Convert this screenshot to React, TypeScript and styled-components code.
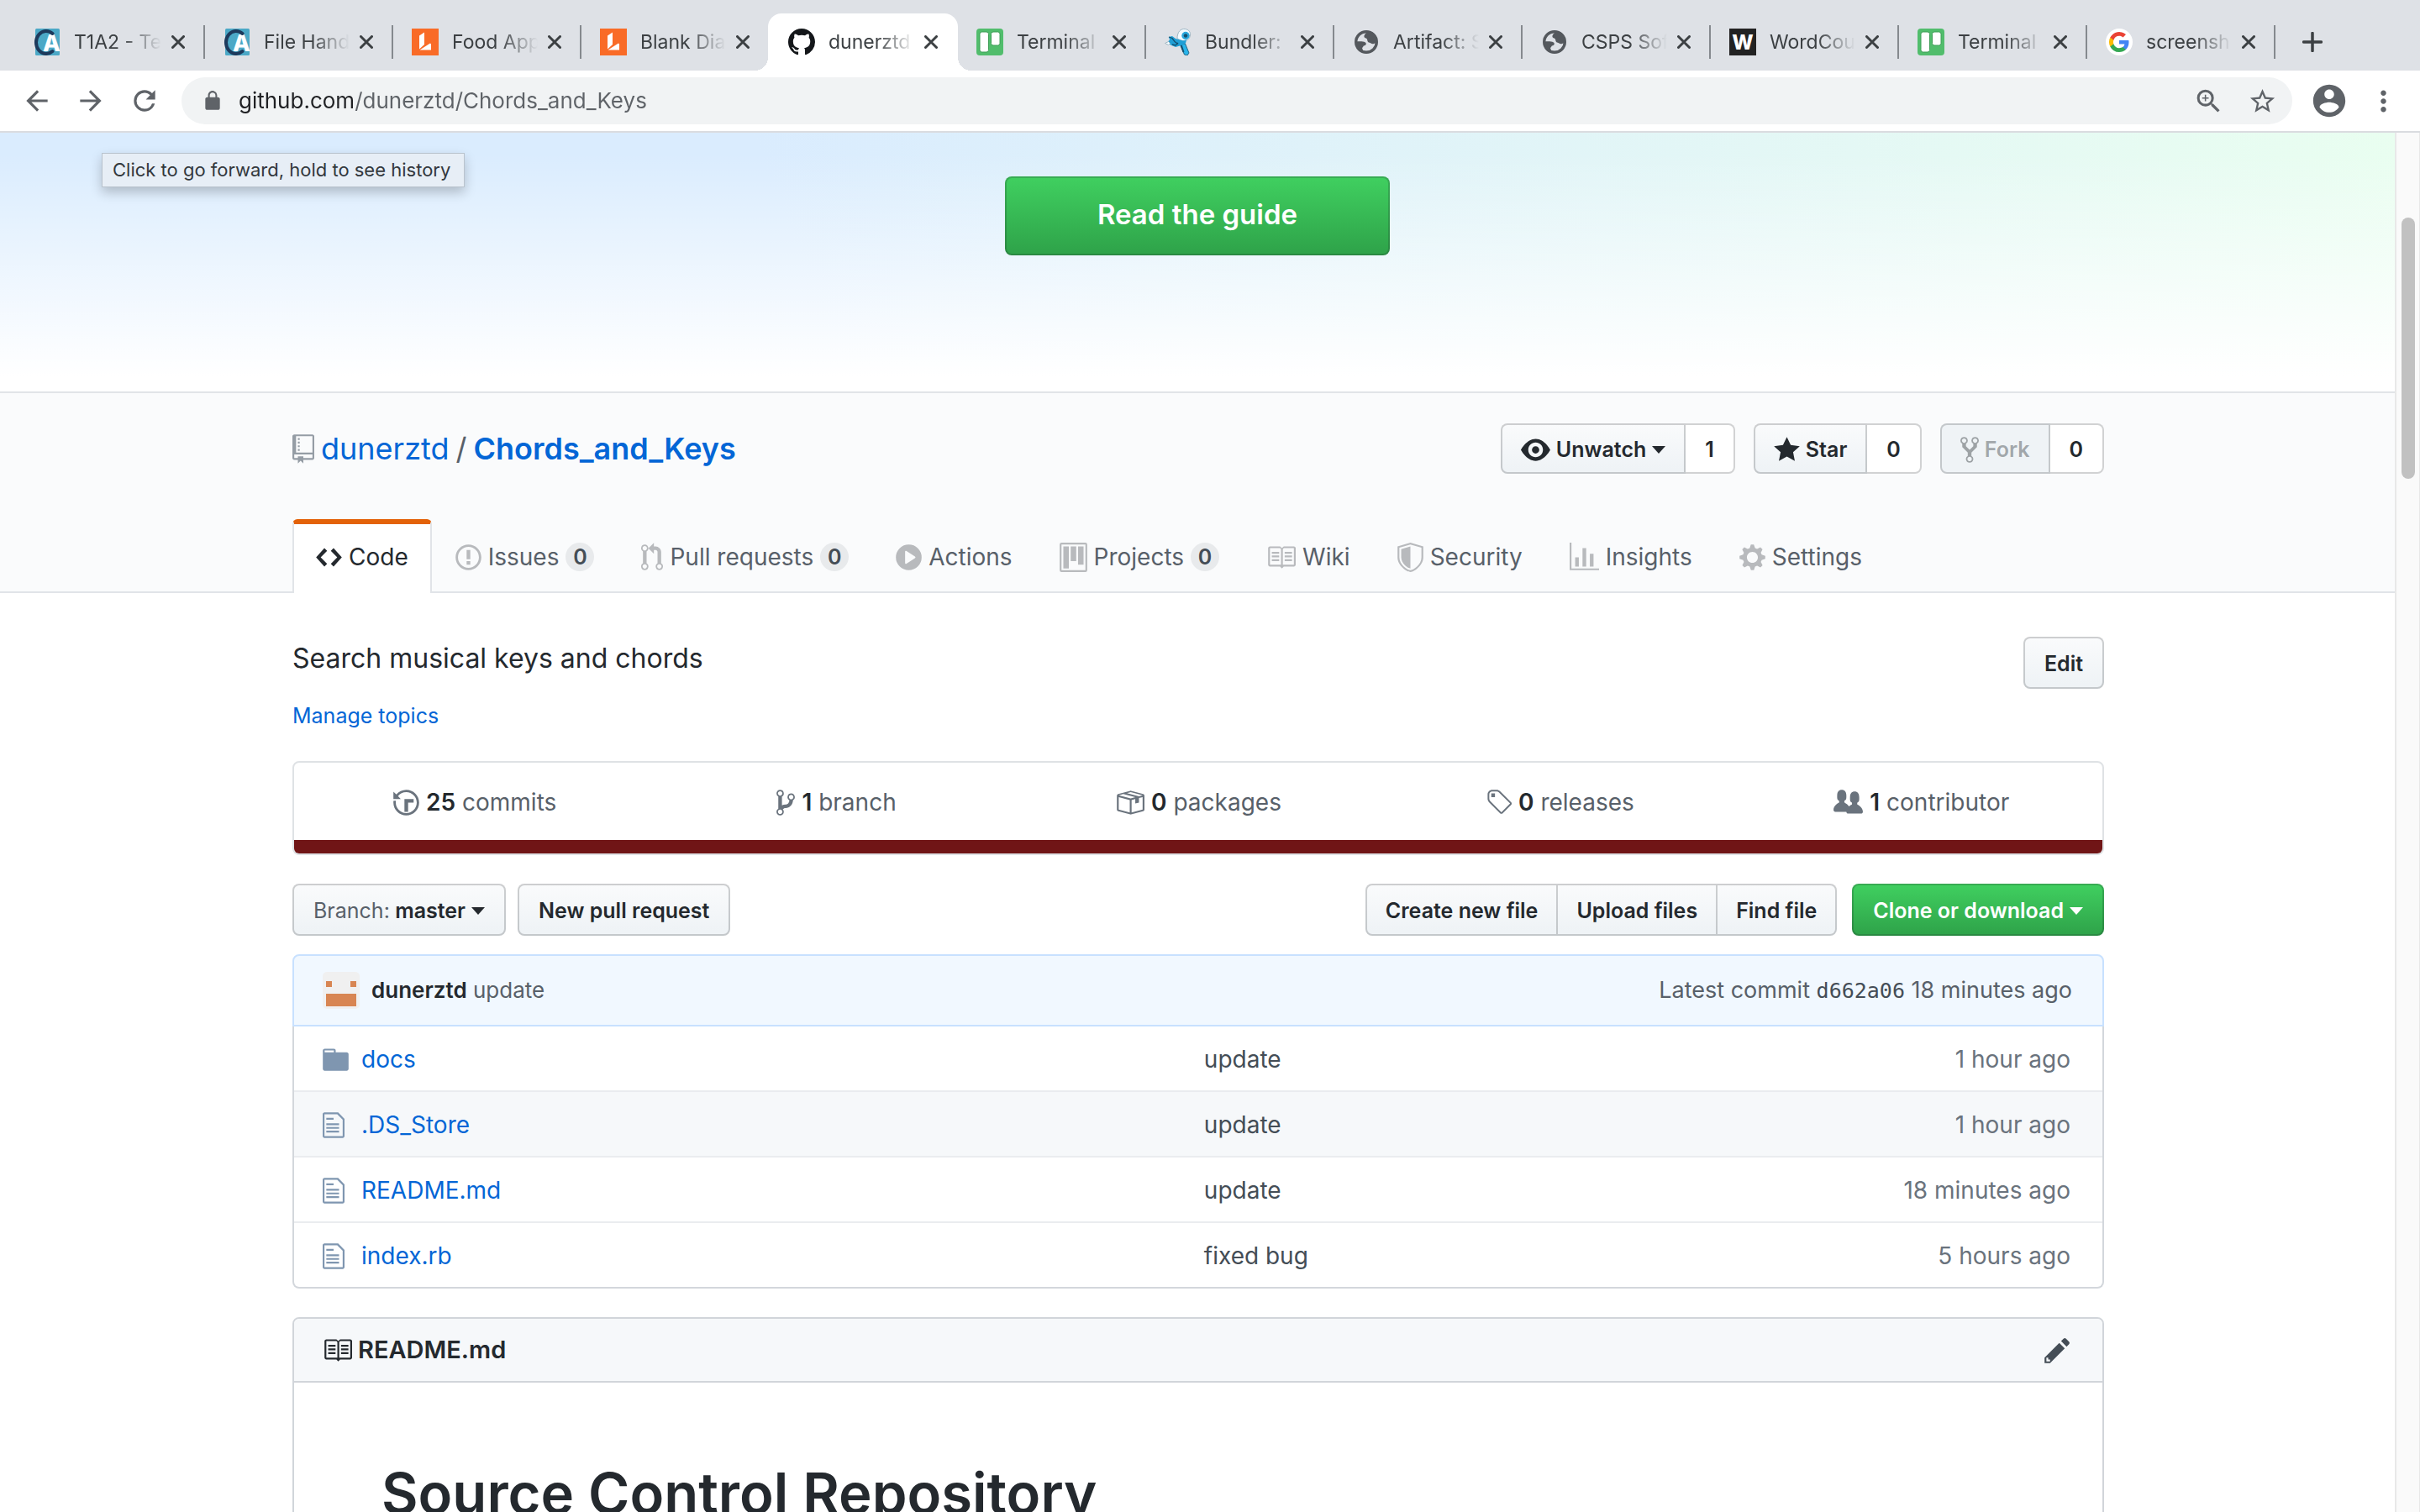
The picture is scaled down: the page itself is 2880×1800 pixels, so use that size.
import React from "react";
import styled, { createGlobalStyle, css } from "styled-components";

const sans = `Inter, "Liberation Sans", Arial, sans-serif`;
const mono = `"DejaVu Sans Mono", "Liberation Mono", monospace`;

const Global = createGlobalStyle`
  * { box-sizing: border-box; }
  body { margin: 0; background: #fff; color: #24292e; font-family: ${sans}; overflow: hidden; }
  button, input { font-family: inherit; }
  a { color: inherit; text-decoration: none; }
  svg { display: block; flex: none; }
`;

/* ---------- icons ---------- */

const OCTICONS = {
  repo: [12, "M4 9H3V8h1v1zm0-3H3v1h1V6zm0-2H3v1h1V4zm0-2H3v1h1V2zm8-1v12c0 .55-.45 1-1 1H6v2l-1.5-1.5L3 16v-2H1c-.55 0-1-.45-1-1V1c0-.55.45-1 1-1h10c.55 0 1 .45 1 1zm-1 10H1v2h2v-1h3v1h5v-2zm0-10H2v9h9V1z"],
  eye: [16, "M8.06 2C3 2 0 8 0 8s3 6 8.06 6C13 14 16 8 16 8s-3-6-7.94-6zM8 12c-2.2 0-4-1.78-4-4 0-2.2 1.8-4 4-4 2.22 0 4 1.8 4 4 0 2.22-1.78 4-4 4zm2-4c0 1.11-.89 2-2 2-1.11 0-2-.89-2-2 0-1.11.89-2 2-2 1.11 0 2 .89 2 2z"],
  star: [14, "M14 6l-4.9-.64L7 1 4.9 5.36 0 6l3.6 3.26L2.67 14 7 11.67 11.33 14l-.93-4.74L14 6z"],
  fork: [10, "M8 1a1.993 1.993 0 00-1 3.72V6L5 8 3 6V4.72A1.993 1.993 0 002 1a1.993 1.993 0 00-1 3.72V6.5l3 3v1.78A1.993 1.993 0 005 15a1.993 1.993 0 001-3.72V9.5l3-3V4.72A1.993 1.993 0 008 1zM2 4.2C1.34 4.2.8 3.65.8 3c0-.65.55-1.2 1.2-1.2.65 0 1.2.55 1.2 1.2 0 .65-.55 1.2-1.2 1.2zm3 10c-.66 0-1.2-.55-1.2-1.2 0-.65.55-1.2 1.2-1.2.65 0 1.2.55 1.2 1.2 0 .65-.55 1.2-1.2 1.2zm3-10c-.66 0-1.2-.55-1.2-1.2 0-.65.55-1.2 1.2-1.2.65 0 1.2.55 1.2 1.2 0 .65-.55 1.2-1.2 1.2z"],
  code: [14, "M9.5 3L8 4.5 11.5 8 8 11.5 9.5 13 14 8 9.5 3zm-5 0L0 8l4.5 5L6 11.5 2.5 8 6 4.5 4.5 3z"],
  issue: [14, "M7 2.3c3.14 0 5.7 2.56 5.7 5.7s-2.56 5.7-5.7 5.7A5.71 5.71 0 011.3 8c0-3.14 2.56-5.7 5.7-5.7zM7 1C3.14 1 0 4.14 0 8s3.14 7 7 7 7-3.14 7-7-3.14-7-7-7zm1 3H6v5h2V4zm0 6H6v2h2v-2z"],
  pull: [12, "M11 11.28V5c-.03-.78-.34-1.47-.94-2.06C9.46 2.35 8.78 2.03 8 2H7V0L4 3l3 3V4h1c.27.02.48.11.69.31.21.2.3.42.31.69v6.28A1.993 1.993 0 0010 15a1.993 1.993 0 001-3.72zm-1 2.92c-.66 0-1.2-.55-1.2-1.2 0-.65.55-1.2 1.2-1.2.65 0 1.2.55 1.2 1.2 0 .65-.55 1.2-1.2 1.2zM4 3c0-1.11-.89-2-2-2a1.993 1.993 0 00-1 3.72v6.56A1.993 1.993 0 002 15a1.993 1.993 0 001-3.72V4.72c.59-.34 1-.98 1-1.72zm-.8 10c0 .66-.55 1.2-1.2 1.2-.65 0-1.2-.55-1.2-1.2 0-.65.55-1.2 1.2-1.2.65 0 1.2.55 1.2 1.2zM2 4.2C1.34 4.2.8 3.65.8 3c0-.65.55-1.2 1.2-1.2.65 0 1.2.55 1.2 1.2 0 .65-.55 1.2-1.2 1.2z"],
  play: [14, "M14 8A7 7 0 110 8a7 7 0 0114 0zm-8.223 3.482l4.599-3.066a.5.5 0 000-.832L5.777 4.518A.5.5 0 005 4.934v6.132a.5.5 0 00.777.416z"],
  project: [15, "M10 12h3V2h-3v10zm-4-2h3V2H6v8zm-4 4h3V2H2v12zm-1 1h13V1H1v14zM14 0H1a1 1 0 00-1 1v14a1 1 0 001 1h13a1 1 0 001-1V1a1 1 0 00-1-1z"],
  book: [16, "M3 5h4v1H3V5zm0 3h4V7H3v1zm0 2h4V9H3v1zm11-5h-4v1h4V5zm0 2h-4v1h4V7zm0 2h-4v1h4V9zm2-6v9c0 .55-.45 1-1 1H9.5l-1 1-1-1H2c-.55 0-1-.45-1-1V3c0-.55.45-1 1-1h5.5l1 1 1-1H15c.55 0 1 .45 1 1zm-8 .5L7.5 3H2v9h6V3.5zm7-.5H9.5l-.5.5V12h6V3z"],
  shield: [14, "M0 2l7-2 7 2v6.02C14 12.69 8.69 16 7 16c-1.69 0-7-3.31-7-7.98V2zm1 .75L7 1l6 1.75v5.268C13 12.104 8.449 15 7 15c-1.449 0-6-2.896-6-6.982V2.75zm1 .75L7 2v12c-1.207 0-5-2.482-5-5.985V3.5z"],
  graph: [16, "M16 14v1H0V0h1v14h15zM5 13H3V8h2v5zm4 0H7V3h2v10zm4 0h-2V6h2v7z"],
  gear: [14, "M14 8.77v-1.6l-1.94-.64-.45-1.09.88-1.84-1.13-1.13-1.81.91-1.09-.45-.69-1.92h-1.6l-.63 1.94-1.11.45-1.84-.88-1.13 1.13.91 1.81-.45 1.09L0 7.23v1.59l1.94.64.45 1.09-.88 1.84 1.13 1.13 1.81-.91 1.09.45.69 1.92h1.59l.63-1.94 1.11-.45 1.84.88 1.13-1.13-.92-1.81.47-1.09L14 8.75v.02zM7 11c-1.66 0-3-1.34-3-3s1.34-3 3-3 3 1.34 3 3-1.34 3-3 3z"],
  history: [14, "M8 13H6V6h5v2H8v5zM7 1C4.81 1 2.87 2.02 1.59 3.59L0 2v4h4L2.5 4.5C3.55 3.17 5.17 2.3 7 2.3c3.14 0 5.7 2.56 5.7 5.7s-2.56 5.7-5.7 5.7A5.71 5.71 0 011.3 8c0-.34.03-.67.09-1H.08C.03 7.33 0 7.66 0 8c0 3.86 3.14 7 7 7s7-3.14 7-7-3.14-7-7-7z"],
  branch: [10, "M10 5c0-1.11-.89-2-2-2a1.993 1.993 0 00-1 3.72v.3c-.02.52-.23.98-.63 1.38-.4.4-.86.61-1.38.63-.83.02-1.48.16-2 .45V4.72a1.993 1.993 0 00-1-3.72C.88 1 0 1.89 0 3a2 2 0 001 1.72v6.56c-.59.35-1 .99-1 1.72 0 1.11.89 2 2 2 1.11 0 2-.89 2-2 0-.53-.2-1-.53-1.36.09-.06.48-.41.59-.47.25-.11.56-.17.94-.17 1.05-.05 1.95-.45 2.75-1.25S8.95 7.77 9 6.73h-.02C9.59 6.37 10 5.73 10 5zM2 1.8c.66 0 1.2.55 1.2 1.2 0 .65-.55 1.2-1.2 1.2C1.35 4.2.8 3.65.8 3c0-.65.55-1.2 1.2-1.2zm0 12.41c-.66 0-1.2-.55-1.2-1.2 0-.65.55-1.2 1.2-1.2.65 0 1.2.55 1.2 1.2 0 .65-.55 1.2-1.2 1.2zm6-8c-.66 0-1.2-.55-1.2-1.2 0-.65.55-1.2 1.2-1.2.65 0 1.2.55 1.2 1.2 0 .65-.55 1.2-1.2 1.2z"],
  pkg: [16, "M1 4.27v7.47c0 .45.3.84.75.97l6.5 1.73c.16.05.34.05.5 0l6.5-1.73c.45-.13.75-.52.75-.97V4.27c0-.45-.3-.84-.75-.97l-6.5-1.74a1.4 1.4 0 00-.5 0L1.75 3.3c-.45.13-.75.52-.75.97zm7 9.09l-6-1.59V5l6 1.61v6.75zM2 4l2.5-.67L11 5.06l-2.5.67L2 4zm13 7.77l-6 1.59V6.61l2-.55V8.5l2-.53V5.53L15 5v6.77zm-2-7.24L6.5 2.8l2-.53L15 4l-2 .53z"],
  tag: [14, "M7.73 1.73C7.26 1.26 6.62 1 5.96 1H3.5C2.13 1 1 2.13 1 3.5v2.47c0 .66.27 1.3.73 1.77l6.06 6.06c.39.39 1.02.39 1.41 0l4.59-4.59a.996.996 0 000-1.41L7.73 1.73zM2.38 7.09c-.31-.3-.47-.7-.47-1.13V3.5c0-.88.72-1.59 1.59-1.59h2.47c.42 0 .83.16 1.13.47l6.14 6.13-4.73 4.73-6.13-6.15zM3.01 3h2v2H3V3h.01z"],
  people: [16, "M16 12.999c0 .439-.45 1-1 1H7.995c-.539 0-.994-.447-.995-.999H1c-.54 0-1-.561-1-1 0-2.634 3-4 3-4s.229-.409 0-1c-.841-.621-1.058-.59-1-3 .058-2.419 1.367-3 2.5-3s2.442.58 2.5 3c.058 2.41-.159 2.379-1 3-.229.59 0 1 0 1s1.549.711 2.42 2.088C9.196 9.369 10 8.999 10 8.999s.229-.409 0-1c-.841-.62-1.058-.59-1-3 .058-2.419 1.367-3 2.5-3s2.437.581 2.495 3c.059 2.41-.158 2.38-1 3-.229.59 0 1 0 1s3.005 1.366 3.005 4z"],
  file: [12, "M6 5H2V4h4v1zM2 8h7V7H2v1zm0 2h7V9H2v1zm0 2h7v-1H2v1zm10-7.5V14c0 .55-.45 1-1 1H1c-.55 0-1-.45-1-1V2c0-.55.45-1 1-1h7.5L12 4.5zM11 5L8 2H1v12h10V5z"],
  folder: [14, "M13 4H7V3c0-.66-.31-1-1-1H1c-.55 0-1 .45-1 1v10c0 .55.45 1 1 1h12c.55 0 1-.45 1-1V5c0-.55-.45-1-1-1zM6 4H1V3h5v1z"],
  pencil: [14, "M0 12v3h3l8-8-3-3-8 8zm3 2H1v-2h1v1h1v1zm10.3-9.3L12 6 9 3l1.3-1.3a.996.996 0 011.41 0l1.59 1.59c.39.39.39 1.02 0 1.41z"],
} as const;

type OctName = keyof typeof OCTICONS;

const Oct = ({ name }: { name: OctName }) => {
  const [w, d] = OCTICONS[name];
  return (
    <svg width={Math.round(w * 2.2)} height={35} viewBox={`0 0 ${w} 16`} fill="currentColor" aria-hidden="true">
      <path fillRule="evenodd" d={d} />
    </svg>
  );
};

const GLYPHS = {
  back: "M20 11H7.83l5.59-5.59L12 4l-8 8 8 8 1.41-1.41L7.83 13H20v-2z",
  forward: "M12 4l-1.41 1.41L16.17 11H4v2h12.17l-5.58 5.59L12 20l8-8z",
  reload: "M17.65 6.35A7.958 7.958 0 0012 4a8 8 0 100 16c3.73 0 6.84-2.55 7.73-6h-2.08A5.99 5.99 0 0112 18a6 6 0 110-12c1.66 0 3.14.69 4.22 1.78L13 11h7V4l-2.35 2.35z",
  lock: "M18 8h-1V6c0-2.76-2.24-5-5-5S7 3.24 7 6v2H6c-1.1 0-2 .9-2 2v10c0 1.1.9 2 2 2h12c1.1 0 2-.9 2-2V10c0-1.1-.9-2-2-2zM8.9 6c0-1.71 1.39-3.1 3.1-3.1s3.1 1.39 3.1 3.1v2H8.9V6z",
  zoom: "M15.5 14h-.79l-.28-.27A6.471 6.471 0 0016 9.500 6.500 6.500 0 109.500 16c1.610 0 3.090-.59 4.230-1.570l.270.280v.79l5 4.990L20.490 19l-4.990-5zm-6 0C7.010 14 5 11.990 5 9.500S7.010 5 9.500 5 14 7.010 14 9.500 11.990 14 9.500 14zM12 10h-2v2H9v-2H7V9h2V7h1v2h2v1z",
  star: "M22 9.240l-7.190-.62L12 2 9.190 8.630 2 9.240l5.460 4.730L5.820 21 12 17.270 18.180 21l-1.630-7.030L22 9.240zM12 15.400l-3.760 2.270 1-4.280-3.320-2.880 4.380-.38L12 6.100l1.710 4.040 4.380.38-3.320 2.880 1 4.280L12 15.400z",
  account: "M12 2C6.480 2 2 6.480 2 12s4.480 10 10 10 10-4.480 10-10S17.520 2 12 2zm0 3c1.660 0 3 1.340 3 3s-1.340 3-3 3-3-1.340-3-3 1.340-3 3-3zm0 14.200c-2.500 0-4.710-1.280-6-3.220.03-1.990 4-3.080 6-3.080 1.990 0 5.970 1.090 6 3.080-1.290 1.940-3.500 3.220-6 3.220z",
  more: "M12 8c1.100 0 2-.9 2-2s-.9-2-2-2-2 .9-2 2 .9 2 2 2zm0 2c-1.100 0-2 .9-2 2s.9 2 2 2 2-.9 2-2-.9-2-2-2zm0 6c-1.100 0-2 .9-2 2s.9 2 2 2 2-.9 2-2-.9-2-2-2z",
} as const;

const Glyph = ({ name, size = 38 }: { name: keyof typeof GLYPHS; size?: number }) => (
  <svg width={size} height={size} viewBox="0 0 24 24" fill="currentColor" aria-hidden="true">
    <path d={GLYPHS[name]} />
  </svg>
);

const AcademyLogo = () => (
  <svg width="32" height="32" viewBox="0 0 32 32" aria-hidden="true">
    <rect x="2" y="0" width="29" height="32" rx="1.500" fill="#4ba8c6" />
    <text x="11" y="27" fontFamily={sans} fontSize="27" fontWeight="800" fill="#fff">A</text>
    <path d="M22.500 6A12 13.500 0 1 0 22.500 27" fill="none" stroke="#1d3a5c" strokeWidth="4" strokeLinecap="round" />
  </svg>
);

const LucidLogo = () => (
  <svg width="32" height="32" viewBox="0 0 32 32" aria-hidden="true">
    <rect width="32" height="32" fill="#f96b27" />
    <path d="M9 8.500l6-4v14.500l-6 5.500zM9.500 25.500l12.500-8 1 1V25.500z" fill="#fff" />
  </svg>
);

const GitHubLogo = () => (
  <svg width="32" height="32" viewBox="0 0 16 16" fill="#14171a" aria-hidden="true">
    <path fillRule="evenodd" d="M8 0C3.580 0 0 3.580 0 8c0 3.540 2.290 6.530 5.470 7.590.4.070.55-.17.55-.38 0-.19-.01-.82-.01-1.490-2.010.37-2.530-.49-2.690-.94-.09-.23-.48-.94-.82-1.130-.28-.15-.68-.52-.01-.53.63-.01 1.080.58 1.230.82.72 1.210 1.870.87 2.330.66.07-.52.28-.87.51-1.070-1.780-.2-3.640-.89-3.640-3.950 0-.87.31-1.590.82-2.150-.08-.2-.36-1.020.08-2.120 0 0 .67-.21 2.200.82.64-.18 1.320-.27 2-.27.68 0 1.360.09 2 .27 1.530-1.040 2.200-.82 2.200-.82.44 1.100.16 1.920.08 2.120.51.56.82 1.270.82 2.150 0 3.070-1.870 3.750-3.650 3.950.29.25.54.73.54 1.480 0 1.070-.01 1.930-.01 2.200 0 .21.15.46.55.38A8.013 8.013 0 0016 8c0-4.420-3.580-8-8-8z" />
  </svg>
);

const TrelloLogo = () => (
  <svg width="32" height="32" viewBox="0 0 32 32" aria-hidden="true">
    <rect width="32" height="32" rx="4" fill="#51bd6c" />
    <rect x="4" y="4" width="10.500" height="24" rx="2.500" fill="#fff" stroke="#3e9e56" />
    <rect x="17.500" y="4" width="10.500" height="16" rx="2.500" fill="#fff" stroke="#3e9e56" />
  </svg>
);

const BundlerLogo = () => (
  <svg width="32" height="32" viewBox="0 0 32 32" aria-hidden="true">
    <path d="M18.500 19.500l6-1.500 4.500 11-2 3-3.500-1z" fill="#29b4ea" stroke="#14506f" strokeWidth=".8" />
    <path d="M19.500 19l3 9" stroke="#14506f" strokeWidth="2" />
    <path d="M15 12C15 4 19 0 24 .5s7 4 6.500 7.500-3 6.500-7 6.500-5-1-8.500-2.500z" fill="#f4fbff" stroke="#9fb7c4" />
    <circle cx="25" cy="8.500" r="4.700" fill="#2ba7dc" />
    <circle cx="25" cy="8.500" r="2.200" fill="#14506f" />
    <path d="M5 10l4-1 4 3 9 2.500 4-1-1 4-5 2.500-7 2-6-2.500-3-4 2-2z" fill="#1f9fd6" />
    <path d="M5 10l4 1.500 3 4 4 3M9 19l4 1 3-3" fill="none" stroke="#14506f" strokeWidth="1.300" />
    <path d="M.5 17.500l4-2 2 2-2 2z" fill="#f4fbff" stroke="#9fb7c4" />
  </svg>
);

const GlobeLogo = () => (
  <svg width="32" height="32" viewBox="0 0 32 32" aria-hidden="true">
    <circle cx="16" cy="16" r="12.300" fill="none" stroke="#54585d" strokeWidth="3.400" />
    <path d="M19 3c-3 2-6 4-5.500 7 .5 1.500 2 1 3 2 1 1 .5 4 2.500 4.500 3 .5 3 2.500 6 1.500 2-.5 3-1.500 4-2C29 9 25 4 19 3z" fill="#54585d" />
    <path d="M3.500 15.500c5-.5 9-.3 11 .8 2 1 1.500 3.700-.5 3.900-2 .2-1.500 1.800-2.500 2.300-1.500 1 2 3.500.5 5.500C6 26 3 21 3.500 15.500z" fill="#54585d" />
  </svg>
);

const WordLogo = () => (
  <svg width="32" height="32" viewBox="0 0 32 32" aria-hidden="true">
    <rect width="32" height="32" fill="#222" />
    <text x="16" y="25" textAnchor="middle" fontFamily={sans} fontSize="24" fontWeight="800" fill="#fff">W</text>
  </svg>
);

const GoogleLogo = () => (
  <svg width="32" height="32" viewBox="0 0 32 32" aria-hidden="true">
    <circle cx="16" cy="16" r="16" fill="#fff" />
    <g transform="translate(4 4)">
      <path fill="#4285f4" d="M23.500 12.300c0-.8-.1-1.600-.2-2.300H12v4.500h6.500a5.500 5.500 0 01-2.400 3.600v3h3.900c2.200-2.100 3.500-5.100 3.500-8.800z" />
      <path fill="#34a853" d="M12 24c3.200 0 6-1.100 8-2.900l-3.900-3c-1.100.7-2.400 1.200-4.100 1.200-3.100 0-5.800-2.100-6.700-5H1.300v3.100A12 12 0 0012 24z" />
      <path fill="#fbbc05" d="M5.300 14.300a7.200 7.200 0 010-4.600V6.600h-4a12 12 0 000 10.800z" />
      <path fill="#ea4335" d="M12 4.800c1.800 0 3.300.6 4.600 1.800L20 3.100A12 12 0 001.300 6.600l4 3.100c.9-2.900 3.600-4.900 6.700-4.900z" />
    </g>
  </svg>
);

const Identicon = () => (
  <svg width="44" height="44" viewBox="0 0 44 44" role="img" aria-label="dunerztd">
    <rect width="44" height="44" rx="5" fill="#f0f0f0" />
    <path d="M4 11h7v7H4zM33 11h7v7h-7zM4 26h36v15H4z" fill="#d88552" />
  </svg>
);

/* ---------- browser chrome ---------- */

const Window = styled.div`
  display: flex;
  flex-direction: column;
  height: 100vh;
  position: relative;
`;

const TabStrip = styled.div`
  display: flex;
  align-items: stretch;
  flex: none;
  padding: 16px 16px 0;
  background: #dee1e6;
`;

const BrowserTab = styled.div<{ $active?: boolean }>`
  display: flex;
  align-items: center;
  flex: 0 1 224px;
  min-width: 0;
  height: 68px;
  padding-right: 16px;
  &:first-child {
    flex-basis: 226px;
  }
  ${(p) =>
    p.$active &&
    css`
      position: relative;
      flex-basis: 226px;
      margin-right: -2px;
      padding-right: 18px;
      background: #fff;
      border-radius: 16px 16px 0 0;
      &::before,
      &::after {
        content: "";
        position: absolute;
        bottom: 0;
        width: 16px;
        height: 16px;
      }
      &::before {
        right: 100%;
        background: radial-gradient(circle at 0 0, transparent 16px, #fff 16px);
      }
      &::after {
        left: 100%;
        background: radial-gradient(circle at 100% 0, transparent 16px, #fff 16px);
      }
    `}
`;

const Separator = styled.span<{ $hidden?: boolean }>`
  flex: none;
  width: 2px;
  height: 40px;
  margin-right: 22px;
  background: ${(p) => (p.$hidden ? "transparent" : "#85898e")};
`;

const TabTitle = styled.span`
  flex: 1;
  min-width: 0;
  margin: 0 6px 0 16px;
  overflow: hidden;
  white-space: nowrap;
  font-size: 23px;
  line-height: 32px;
  color: #3c4043;
  mask-image: linear-gradient(90deg, #000 56%, transparent);
`;

const IconButton = styled.button<{ $width?: number; $color?: string }>`
  display: flex;
  align-items: center;
  justify-content: center;
  flex: none;
  width: ${(p) => p.$width ?? 64}px;
  height: 56px;
  padding: 0;
  border: 0;
  background: none;
  color: ${(p) => p.$color ?? "#5f6368"};
`;

const Toolbar = styled.div`
  display: flex;
  align-items: center;
  flex: none;
  padding: 8px 12px;
  background: #fff;
  border-bottom: 2px solid #dadce0;
`;

const Omnibox = styled.label`
  display: flex;
  align-items: center;
  flex: 1;
  height: 56px;
  margin: 0 12px;
  padding: 0 4px 0 24px;
  border-radius: 28px;
  background: #f1f3f4;
  color: #5f6368;
`;

const UrlInput = styled.input`
  flex: 1;
  min-width: 0;
  margin-left: 18px;
  padding: 0;
  border: 0;
  outline: 0;
  font-size: 26px;
  line-height: 40px;
  color: transparent;
  background: linear-gradient(90deg, #202124 138px, #5f6368 138px);
  background-clip: text;
  -webkit-background-clip: text;
`;

const Tooltip = styled.div`
  position: absolute;
  top: 182px;
  left: 121px;
  z-index: 2;
  padding: 0 16px 1px 12px;
  border: 1px solid #b9c3cd;
  background: #e7eef6;
  box-shadow: 0 6px 14px rgba(0, 0, 0, 0.22);
  font-size: 22px;
  line-height: 38px;
  color: #33383d;
`;

const Viewport = styled.div`
  display: flex;
  flex: 1;
  min-height: 0;
`;

const Page = styled.main`
  flex: 1;
  min-width: 0;
  overflow: hidden;
`;

const ScrollTrack = styled.div`
  flex: none;
  width: 30px;
  padding: 101px 6px 0;
  background: #fafafa;
  border-left: 2px solid #e8e8e8;
  border-right: 1px solid #e8e8e8;
`;

const ScrollThumb = styled.div`
  width: 16px;
  height: 311px;
  border-radius: 8px;
  background: #c1c1c1;
`;

/* ---------- shared page parts ---------- */

const Container = styled.div`
  max-width: 2158px;
  margin: 0 auto;
  padding-left: 2px;
`;

const Row = styled.div<{ $gap?: number; $top?: number }>`
  display: flex;
  align-items: center;
  gap: ${(p) => p.$gap ?? 0}px;
  margin-top: ${(p) => p.$top ?? 0}px;
`;

const Spread = styled(Row)`
  justify-content: space-between;
`;

const Button = styled.button<{ $primary?: boolean; $social?: boolean; $roomy?: boolean }>`
  display: flex;
  align-items: center;
  gap: 7px;
  height: ${(p) => (p.$social ? 60 : 62)}px;
  padding: 2px ${(p) => (p.$roomy ? 23 : 22)}px 0;
  border: 2px solid rgba(27, 31, 35, 0.2);
  border-radius: 8px;
  background: ${(p) =>
    p.$primary ? "linear-gradient(#40d060, #2fa44a 95%)" : "linear-gradient(#fafbfc, #eff3f6 90%)"};
  background-origin: border-box;
  color: ${(p) => (p.$primary ? "#fff" : "#24292e")};
  font-size: 25px;
  font-weight: 600;
  line-height: 40px;
  white-space: nowrap;
  &:disabled {
    color: rgba(36, 41, 46, 0.4);
    background: #eff3f6;
  }
`;

const GuideButton = styled(Button)`
  justify-content: center;
  width: 458px;
  height: 94px;
  padding: 0 22px 4px;
  font-size: 33px;
`;

const Group = styled.div`
  display: flex;
  & > :not(:last-child) {
    border-top-right-radius: 0;
    border-bottom-right-radius: 0;
  }
  & > :not(:first-child) {
    border-left-width: 0;
    border-top-left-radius: 0;
    border-bottom-left-radius: 0;
  }
`;

const SocialCount = styled.a`
  padding: 0 23px;
  border: 2px solid #d1d2d3;
  border-radius: 8px;
  background: #fff;
  font-size: 25px;
  font-weight: 600;
  line-height: 58px;
  height: 60px;
`;

const Caret = styled.span`
  width: 0;
  height: 0;
  border: 8px solid transparent;
  border-top: 9px solid currentColor;
  border-bottom: 0;
`;

const Soft = styled.span`
  font-weight: 400;
  color: #586069;
`;

/* ---------- page ---------- */

const Banner = styled.section`
  display: flex;
  justify-content: center;
  padding: 52px 0 162px;
  background:
    linear-gradient(180deg, rgba(255, 255, 255, 0) 8%, #fff 94%),
    linear-gradient(70deg, #daecfe 34%, #e9fef0);
  border-bottom: 2px solid #e1e4e8;
`;

const RepoHead = styled.header`
  padding-top: 36px;
  background: #fafbfc;
  border-bottom: 2px solid #e1e4e8;
`;

const RepoTitle = styled.h1`
  display: flex;
  align-items: center;
  gap: 8px;
  margin: 0;
  font-size: 36px;
  font-weight: 400;
  line-height: 60px;
  color: #0366d6;
  svg {
    color: #959da5;
  }
`;

const Slash = styled.span`
  color: #586069;
`;

const Strong = styled.a`
  font-weight: 600;
`;

const Nav = styled.nav`
  display: flex;
  margin: 54px 0 -2px;
`;

const NavTab = styled.a<{ $selected?: boolean }>`
  display: flex;
  align-items: center;
  gap: 8px;
  height: 88px;
  padding: 0 26px 4px;
  border: 2px solid transparent;
  border-top-width: 6px;
  border-bottom: 0;
  border-radius: 6px 6px 0 0;
  font-size: 28px;
  line-height: 40px;
  color: #586069;
  svg {
    color: #b8babd;
  }
  ${(p) =>
    p.$selected &&
    css`
      border-color: #e36209 #e1e4e8 transparent;
      background: #fff;
      color: #24292e;
      svg {
        color: #24292e;
      }
    `}
`;

const Counter = styled.span`
  min-width: 34px;
  border-radius: 17px;
  background: #e8eaec;
  text-align: center;
  font-size: 25px;
  font-weight: 600;
  line-height: 34px;
  color: #444d56;
`;

const Description = styled.p`
  margin: 0;
  align-self: flex-start;
  font-size: 32px;
  line-height: 52px;
`;

const Topics = styled.a`
  display: block;
  width: max-content;
  margin-top: 12px;
  font-size: 25px;
  line-height: 40px;
  color: #0366d6;
`;

const Stats = styled.section`
  margin-top: 34px;
  border: 2px solid #dfe2e5;
  border-radius: 8px;
  overflow: hidden;
`;

const StatList = styled.ul`
  display: grid;
  grid-template-columns: repeat(5, 1fr);
  margin: 0;
  padding: 0;
  list-style: none;
`;

const Stat = styled.li`
  display: flex;
  align-items: center;
  justify-content: center;
  gap: 8px;
  height: 92px;
  padding-top: 2px;
  font-size: 28px;
  line-height: 40px;
  color: #586069;
  svg {
    color: #6a737d;
  }
  b {
    font-weight: 600;
    color: #24292e;
  }
`;

const LanguageBar = styled.div`
  height: 16px;
  background: #701516;
`;

const Commit = styled.div`
  display: flex;
  align-items: center;
  justify-content: space-between;
  height: 86px;
  margin-top: 22px;
  padding: 0 36px 0 34px;
  border: 2px solid #c8e1ff;
  border-radius: 8px 8px 0 0;
  background: #f1f8ff;
  font-size: 26px;
  line-height: 40px;
  color: #586069;
  b {
    font-weight: 600;
    color: #24292e;
  }
`;

const CommitInfo = styled.span`
  font-size: 27px;
`;

const Sha = styled.a`
  font-family: ${mono};
  font-size: 25px;
  color: #444d56;
`;

const FileTable = styled.table`
  width: 100%;
  table-layout: fixed;
  border: 2px solid #d3d7dc;
  border-top: 0;
  border-radius: 0 0 8px 8px;
  border-spacing: 0;
  font-size: 28px;
  line-height: 40px;
`;

const FileRow = styled.tr<{ $shaded?: boolean }>`
  background: ${(p) => (p.$shaded ? "#f6f8fa" : "transparent")};
  &:not(:first-child) td {
    border-top: 2px solid #eaecef;
  }
`;

const Cell = styled.td<{ $width?: string; $age?: boolean }>`
  width: ${(p) => p.$width ?? "auto"};
  padding: ${(p) => (p.$age ? "19px 38px 17px 0" : "19px 0 17px")};
  text-align: ${(p) => (p.$age ? "right" : "left")};
  color: ${(p) => (p.$age ? "#6a737d" : "#444d56")};
`;

const IconCell = styled(Cell)`
  padding-left: 34px;
  color: #7f96b0;
`;

const FileLink = styled.a`
  color: #0366d6;
`;

const Readme = styled.article`
  margin-top: 34px;
  border: 2px solid #d1d5da;
  border-radius: 8px;
`;

const ReadmeHead = styled.header`
  display: flex;
  align-items: center;
  justify-content: space-between;
  height: 76px;
  padding: 0 38px 0 34px;
  border-bottom: 2px solid #d1d5da;
  border-radius: 6px 6px 0 0;
  background: #f6f8fa;
`;

const ReadmeName = styled.h2`
  display: flex;
  align-items: center;
  gap: 7px;
  margin: 0;
  font-size: 29px;
  font-weight: 600;
  line-height: 40px;
`;

const ReadmeBody = styled.div`
  padding: 88px 104px;
  h1 {
    margin: 0;
    font-size: 67px;
    font-weight: 600;
    line-height: 88px;
  }
`;

/* ---------- data ---------- */

const TABS = [
  { title: "T1A2 - Te", Logo: AcademyLogo },
  { title: "File Hand", Logo: AcademyLogo },
  { title: "Food App", Logo: LucidLogo },
  { title: "Blank Dia", Logo: LucidLogo },
  { title: "dunerztd", Logo: GitHubLogo },
  { title: "Terminal", Logo: TrelloLogo },
  { title: "Bundler:", Logo: BundlerLogo },
  { title: "Artifact: S", Logo: GlobeLogo },
  { title: "CSPS Sof", Logo: GlobeLogo },
  { title: "WordCou", Logo: WordLogo },
  { title: "Terminal", Logo: TrelloLogo },
  { title: "screensh", Logo: GoogleLogo },
];
const ACTIVE_TAB = 4;

const NAV: { icon: OctName; label: string; count?: number }[] = [
  { icon: "code", label: "Code" },
  { icon: "issue", label: "Issues", count: 0 },
  { icon: "pull", label: "Pull requests", count: 0 },
  { icon: "play", label: "Actions" },
  { icon: "project", label: "Projects", count: 0 },
  { icon: "book", label: "Wiki" },
  { icon: "shield", label: "Security" },
  { icon: "graph", label: "Insights" },
  { icon: "gear", label: "Settings" },
];

const STATS: { icon: OctName; count: number; label: string }[] = [
  { icon: "history", count: 25, label: "commits" },
  { icon: "branch", count: 1, label: "branch" },
  { icon: "pkg", count: 0, label: "packages" },
  { icon: "tag", count: 0, label: "releases" },
  { icon: "people", count: 1, label: "contributor" },
];

const FILES: { icon: OctName; name: string; message: string; age: string }[] = [
  { icon: "folder", name: "docs", message: "update", age: "1 hour ago" },
  { icon: "file", name: ".DS_Store", message: "update", age: "1 hour ago" },
  { icon: "file", name: "README.md", message: "update", age: "18 minutes ago" },
  { icon: "file", name: "index.rb", message: "fixed bug", age: "5 hours ago" },
];

const Cross = () => (
  <svg width="16" height="16" viewBox="0 0 16 16" aria-hidden="true">
    <path d="M1.500 1.500l13 13M14.500 1.500l-13 13" stroke="#3c4043" strokeWidth="3" strokeLinecap="round" />
  </svg>
);

const Chrome = () => (
  <>
    <TabStrip>
      {TABS.map(({ title, Logo }, i) => (
        <BrowserTab key={i} $active={i === ACTIVE_TAB}>
          <Separator $hidden={i === 0 || i === ACTIVE_TAB || i === ACTIVE_TAB + 1} />
          <Logo />
          <TabTitle>{title}</TabTitle>
          <IconButton $width={28} aria-label="Close tab">
            <Cross />
          </IconButton>
        </BrowserTab>
      ))}
      <Row>
        <Separator />
        <IconButton $width={44} aria-label="New tab">
          <svg width="24" height="24" viewBox="0 0 24 24" aria-hidden="true">
            <path d="M12 1.500v21M1.500 12h21" stroke="#3c4043" strokeWidth="3.500" strokeLinecap="round" />
          </svg>
        </IconButton>
      </Row>
    </TabStrip>
    <Toolbar>
      <IconButton aria-label="Back"><Glyph name="back" /></IconButton>
      <IconButton aria-label="Forward"><Glyph name="forward" /></IconButton>
      <IconButton aria-label="Reload"><Glyph name="reload" /></IconButton>
      <Omnibox>
        <Glyph name="lock" size={26} />
        <UrlInput aria-label="Address" defaultValue="github.com/dunerztd/Chords_and_Keys" />
        <IconButton aria-label="Zoom"><Glyph name="zoom" size={37} /></IconButton>
        <IconButton aria-label="Bookmark"><Glyph name="star" size={35} /></IconButton>
      </Omnibox>
      <IconButton aria-label="Profile"><Glyph name="account" size={46} /></IconButton>
      <IconButton aria-label="Menu"><Glyph name="more" size={39} /></IconButton>
    </Toolbar>
    <Tooltip role="tooltip">Click to go forward, hold to see history</Tooltip>
  </>
);

const Header = () => (
  <RepoHead>
    <Container>
      <Spread>
        <RepoTitle>
          <Oct name="repo" />
          <a href="#owner">dunerztd</a>
          <Slash>/</Slash>
          <Strong href="#repo">Chords_and_Keys</Strong>
        </RepoTitle>
        <Row $gap={22}>
          <Group>
            <Button $social><Oct name="eye" />Unwatch<Caret /></Button>
            <SocialCount href="#watchers">1</SocialCount>
          </Group>
          <Group>
            <Button $social><Oct name="star" />Star</Button>
            <SocialCount href="#stars">0</SocialCount>
          </Group>
          <Group>
            <Button $social disabled><Oct name="fork" />Fork</Button>
            <SocialCount href="#forks">0</SocialCount>
          </Group>
        </Row>
      </Spread>
      <Nav>
        {NAV.map(({ icon, label, count }) => (
          <NavTab key={label} href={`#${icon}`} $selected={icon === "code"}>
            <Oct name={icon} />
            {label}
            {count !== undefined && <Counter>{count}</Counter>}
          </NavTab>
        ))}
      </Nav>
    </Container>
  </RepoHead>
);

const App = () => (
  <Window>
    <Global />
    <Chrome />
    <Viewport>
      <Page>
        <Banner>
          <GuideButton $primary>Read the guide</GuideButton>
        </Banner>
        <Header />
        <Container>
          <Spread $top={52}>
            <Description>Search musical keys and chords</Description>
            <Button $roomy>Edit</Button>
          </Spread>
          <Topics href="#topics">Manage topics</Topics>
          <Stats>
            <StatList>
              {STATS.map(({ icon, count, label }) => (
                <Stat key={label}>
                  <Oct name={icon} />
                  <span><b>{count}</b> {label}</span>
                </Stat>
              ))}
            </StatList>
            <LanguageBar />
          </Stats>
          <Spread $top={34}>
            <Row $gap={14}>
              <Button $roomy><span><Soft>Branch:</Soft> master</span><Caret /></Button>
              <Button $roomy>New pull request</Button>
            </Row>
            <Row $gap={18}>
              <Group>
                <Button>Create new file</Button>
                <Button>Upload files</Button>
                <Button>Find file</Button>
              </Group>
              <Button $primary $roomy>Clone or download<Caret /></Button>
            </Row>
          </Spread>
          <Commit>
            <Row $gap={14}>
              <Identicon />
              <span><b>dunerztd</b> update</span>
            </Row>
            <CommitInfo>Latest commit <Sha href="#commit">d662a06</Sha> 18 minutes ago</CommitInfo>
          </Commit>
          <FileTable>
            <tbody>
              {FILES.map(({ icon, name, message, age }, i) => (
                <FileRow key={name} $shaded={i === 1}>
                  <IconCell $width="80px"><Oct name={icon} /></IconCell>
                  <Cell $width="46.600%"><FileLink href={`#${name}`}>{name}</FileLink></Cell>
                  <Cell>{message}</Cell>
                  <Cell $width="20%" $age>{age}</Cell>
                </FileRow>
              ))}
            </tbody>
          </FileTable>
          <Readme>
            <ReadmeHead>
              <ReadmeName><Oct name="book" />README.md</ReadmeName>
              <IconButton $width={31} $color="#444d56" aria-label="Edit README"><Oct name="pencil" /></IconButton>
            </ReadmeHead>
            <ReadmeBody>
              <h1>Source Control Repository</h1>
            </ReadmeBody>
          </Readme>
        </Container>
      </Page>
      <ScrollTrack>
        <ScrollThumb />
      </ScrollTrack>
    </Viewport>
  </Window>
);

export default App;
